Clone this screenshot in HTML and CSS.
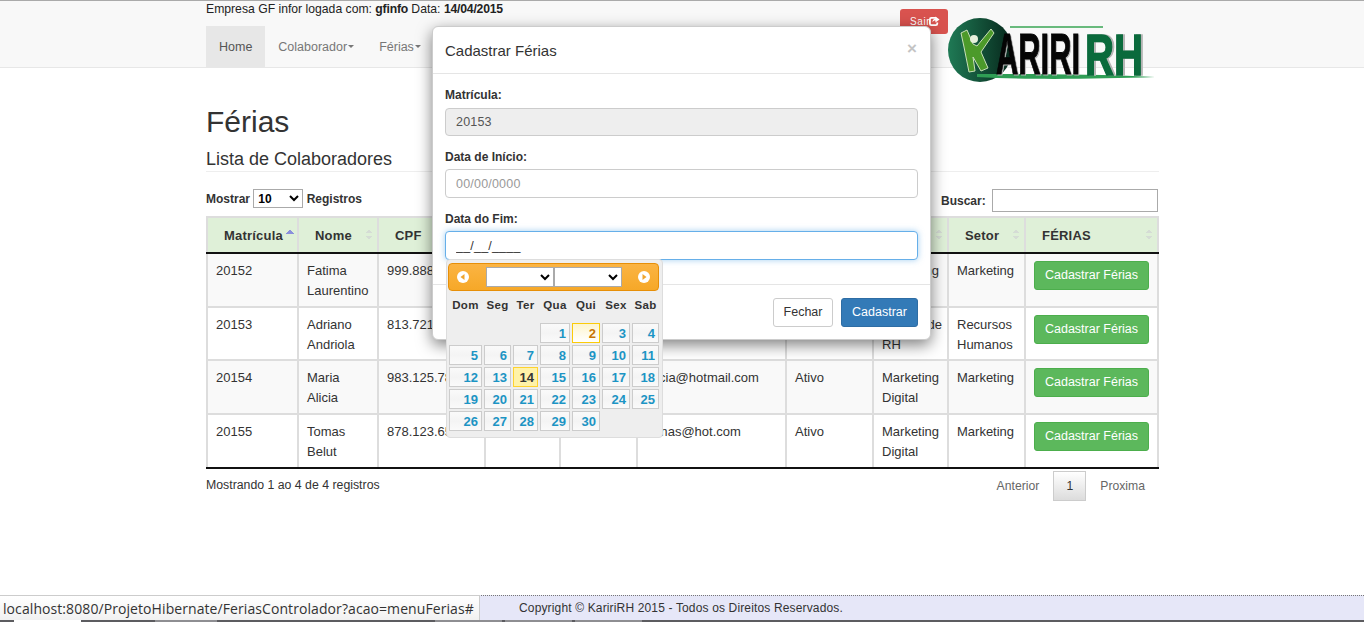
FILE: index.html
```html
<!DOCTYPE html>
<html lang="en">
<head>
    <meta charset="UTF-8">
    <title>KaririRH - Férias</title>
    <link rel="stylesheet" href="styles.css">
</head>
<body>
    <!-- Top bar + menu -->
    <header class="site-header">
        <div class="topbar">
            <p class="session">Empresa GF infor logada com: <b>gfinfo</b> Data: <b>14/04/2015</b></p>
            <a class="btn-sair" href="#">Sair<svg class="sair-icon" viewBox="0 0 12 12" width="11" height="11"><path d="M8 2H2.500A1.500 1.500 0 0 0 1 3.500v5A1.500 1.500 0 0 0 2.500 10h5A1.500 1.500 0 0 0 9 8.500V7" fill="none" stroke="#fff" stroke-width="2"/><path d="M7 0.500l4.500 3.200L7 7V5C5.500 5 4.500 5.500 3.800 7 3.800 4.500 5 3 7 2.800z" fill="#fff"/></svg></a>
        </div>
        <nav class="menu">
            <a class="menu-item active" href="#">Home</a>
            <a class="menu-item" href="#">Colaborador<span class="caret"></span></a>
            <a class="menu-item" href="#">Férias<span class="caret"></span></a>
        </nav>
        <svg class="logo" viewBox="0 0 210 72" width="210" height="72">
            <defs>
                <linearGradient id="ball" x1="0" x2="1" y1="0" y2="0">
                    <stop offset="0" stop-color="#1f7a55"/>
                    <stop offset="1" stop-color="#07281c"/>
                </linearGradient>
            </defs>
            <circle cx="33" cy="33" r="32" fill="url(#ball)"/>
            <path d="M63 10H156" stroke="#3aa655" stroke-width="1.500"/>
            <path d="M30 60C80 63 150 62 208 60C150 57 80 57 30 57z" fill="#2f9e55"/>
            <text class="logo-kariri" x="49" y="57" textLength="84" lengthAdjust="spacingAndGlyphs">ARIRI</text>
            <text class="logo-rh" x="138" y="58" textLength="58" lengthAdjust="spacingAndGlyphs">RH</text>
            <path d="M14 16L20 13L26 27L30 29L44 12L47 16L34 35L41 51L34 54L26 40L28 54L22 55L17 30z" fill="#4c9a2a" stroke="#c9dfb8" stroke-width="1"/>
            <circle cx="27" cy="22" r="4" fill="#e6f0dc"/>
        </svg>
    </header>

    <main class="content">
        <h1 class="page-title">Férias</h1>
        <h3 class="section-title">Lista de Colaboradores</h3>

        <div class="table-tools">
            <label class="tool-label">Mostrar
                <select class="len-select"><option>10</option></select>
                Registros</label>
            <label class="tool-label">Buscar: <input class="search-input" type="text"></label>
        </div>

        <table class="data-table">
            <colgroup>
                <col class="c1"><col class="c2"><col class="c3"><col class="c4"><col class="c5">
                <col class="c6"><col class="c7"><col class="c8"><col class="c9"><col class="c10">
            </colgroup>
            <thead>
                <tr>
                    <th class="sorted">Matrícula</th>
                    <th>Nome</th>
                    <th>CPF</th>
                    <th>RG</th>
                    <th>Fone</th>
                    <th>Email</th>
                    <th>Status</th>
                    <th>Cargo</th>
                    <th>Setor</th>
                    <th>FÉRIAS</th>
                </tr>
            </thead>
            <tbody>
                <tr>
                    <td>20152</td><td>Fatima Laurentino</td><td class="nw">999.888.777-66</td><td class="nw">1234567</td><td class="nw">8899-1234</td>
                    <td>fatima@hotmail.com</td><td>Ativo</td><td>Marketing Digital</td><td>Marketing</td>
                    <td><a class="btn-ferias" href="#">Cadastrar Férias</a></td>
                </tr>
                <tr>
                    <td>20153</td><td>Adriano Andriola</td><td class="nw">813.721.456-10</td><td class="nw">2345678</td><td class="nw">8899-2345</td>
                    <td>adriano@hotmail.com</td><td>Ativo</td><td class="nw">Gestão de<br>RH</td><td>Recursos Humanos</td>
                    <td><a class="btn-ferias" href="#">Cadastrar Férias</a></td>
                </tr>
                <tr>
                    <td>20154</td><td>Maria Alicia</td><td class="nw">983.125.789-20</td><td class="nw">3456789</td><td class="nw">8899-3456</td>
                    <td>alicia@hotmail.com</td><td>Ativo</td><td>Marketing Digital</td><td>Marketing</td>
                    <td><a class="btn-ferias" href="#">Cadastrar Férias</a></td>
                </tr>
                <tr>
                    <td>20155</td><td>Tomas Belut</td><td class="nw">878.123.654-30</td><td class="nw">4567890</td><td class="nw">8899-4567</td>
                    <td>tomas@hot.com</td><td>Ativo</td><td>Marketing Digital</td><td>Marketing</td>
                    <td><a class="btn-ferias" href="#">Cadastrar Férias</a></td>
                </tr>
            </tbody>
        </table>

        <div class="table-foot">
            <span>Mostrando 1 ao 4 de 4 registros</span>
            <div class="pager">
                <a class="page-link" href="#">Anterior</a>
                <a class="page-current" href="#">1</a>
                <a class="page-link" href="#">Proxima</a>
            </div>
        </div>
    </main>

    <footer class="site-footer">Copyright © KaririRH 2015 - Todos os Direitos Reservados.</footer>
    <div class="taskbar">
        <span class="task task-on"></span>
        <span class="task task-wide-gap"></span>
        <span class="task"></span>
        <span class="task"></span>
        <span class="task"></span>
    </div>

    <!-- browser link preview -->
    <div class="link-status">localhost:8080/ProjetoHibernate/FeriasControlador?acao=menuFerias#</div>

    <!-- Modal -->
    <div class="modal">
        <div class="modal-header">
            <h4>Cadastrar Férias</h4>
            <span class="modal-close">×</span>
        </div>
        <div class="modal-body">
            <label class="field-label">Matrícula:</label>
            <input class="field field-off" type="text" value="20153" disabled>
            <label class="field-label">Data de Início:</label>
            <input class="field" type="text" placeholder="00/00/0000">
            <label class="field-label">Data do Fim:</label>
            <input class="field field-focus" type="text" value="__/__/____">
        </div>
        <div class="modal-footer">
            <a class="btn-close" href="#">Fechar</a>
            <a class="btn-save" href="#">Cadastrar</a>
        </div>
    </div>

    <!-- Datepicker -->
    <div class="datepicker">
        <div class="dp-head">
            <svg class="dp-arrow" viewBox="0 0 12 12" width="12" height="12"><circle cx="6" cy="6" r="6" fill="#fff"/><path d="M7.500 3v6L3.500 6z" fill="#f0a52e"/></svg>
            <div class="dp-selects">
                <select class="dp-select"></select>
                <select class="dp-select"></select>
            </div>
            <svg class="dp-arrow" viewBox="0 0 12 12" width="12" height="12"><circle cx="6" cy="6" r="6" fill="#fff"/><path d="M4.500 3v6L8.500 6z" fill="#f0a52e"/></svg>
        </div>
        <div class="dp-grid">
            <span class="dp-dow">Dom</span><span class="dp-dow">Seg</span><span class="dp-dow">Ter</span><span class="dp-dow">Qua</span><span class="dp-dow">Qui</span><span class="dp-dow">Sex</span><span class="dp-dow">Sab</span>
            <span></span><span></span><span></span>
            <a class="dp-day">1</a><a class="dp-day dp-hover">2</a><a class="dp-day">3</a><a class="dp-day">4</a>
            <a class="dp-day">5</a><a class="dp-day">6</a><a class="dp-day">7</a><a class="dp-day">8</a><a class="dp-day">9</a><a class="dp-day">10</a><a class="dp-day">11</a>
            <a class="dp-day">12</a><a class="dp-day">13</a><a class="dp-day dp-today">14</a><a class="dp-day">15</a><a class="dp-day">16</a><a class="dp-day">17</a><a class="dp-day">18</a>
            <a class="dp-day">19</a><a class="dp-day">20</a><a class="dp-day">21</a><a class="dp-day">22</a><a class="dp-day">23</a><a class="dp-day">24</a><a class="dp-day">25</a>
            <a class="dp-day">26</a><a class="dp-day">27</a><a class="dp-day">28</a><a class="dp-day">29</a><a class="dp-day">30</a>
        </div>
    </div>
</body>
</html>
```

FILE: styles.css
```css
* {
    margin: 0;
    padding: 0;
    box-sizing: border-box;
}

body {
    position: relative;
    height: 622px;
    overflow: hidden;
    display: flex;
    flex-direction: column;
    background: #fff;
    color: #333;
    font-family: "Liberation Sans", Arial, sans-serif;
    font-size: 12.5px;
}

a {
    text-decoration: none;
    color: inherit;
}

/* header */
.site-header {
    position: relative;
    height: 68px;
    padding-left: 206px;
    background: #f8f8f8;
    border-top: 1px solid #aaa;
    border-bottom: 1px solid #e7e7e7;
}

.topbar {
    display: flex;
    height: 25px;
}

.session {
    padding-top: 1px;
    font-size: 12.2px;
    color: #222;
}

.session b {
    letter-spacing: -0.2px;
}

.btn-sair {
    display: flex;
    align-items: center;
    height: 25px;
    width: 48px;
    margin: 8px 416px 0 auto;
    padding-left: 10px;
    border-radius: 3px;
    background: #d9534f;
    color: #fff;
    font-size: 10px;
    letter-spacing: 0.6px;
}

.sair-icon {
    margin-left: -1px;
}

.menu {
    display: flex;
    height: 41px;
}

.menu-item {
    display: flex;
    align-items: center;
    padding: 0 12px 0 13px;
    color: #777;
}

.menu-item.active {
    padding-right: 13px;
    background: #e7e7e7;
    color: #555;
}

.caret {
    width: 0;
    height: 0;
    margin-left: 1px;
    border-top: 3px solid #777;
    border-left: 3px solid transparent;
    border-right: 3px solid transparent;
}

.logo {
    position: absolute;
    left: 947px;
    top: 16px;
}

.logo-kariri,
.logo-rh {
    font-family: "Liberation Sans", sans-serif;
    font-weight: 700;
    font-size: 58px;
}

.logo-kariri {
    fill: #050505;
    stroke: #050505;
    stroke-width: 1px;
    filter: drop-shadow(1px 1px 0 #bbb);
}

.logo-rh {
    fill: #0a6a3c;
    stroke: #0a6a3c;
    stroke-width: 1.500px;
    filter: drop-shadow(2px 0 0 #b5b5b5);
}

/* main */
.content {
    flex: 1;
    width: 953px;
    margin-left: 206px;
}

.page-title {
    margin-top: 37px;
    font-size: 30px;
    font-weight: 500;
    line-height: 33px;
}

.section-title {
    margin-top: 11px;
    padding-bottom: 2px;
    font-size: 18px;
    font-weight: 500;
    line-height: 20px;
    border-bottom: 1px solid #eee;
}

.table-tools {
    display: flex;
    justify-content: space-between;
    align-items: flex-start;
    height: 22px;
    margin-top: 17px;
    margin-bottom: 5px;
}

.tool-label {
    font-size: 12px;
    font-weight: 700;
}

.len-select {
    width: 50px;
    height: 19px;
    font-family: "Liberation Sans", sans-serif;
    font-size: 12px;
    font-weight: 700;
    border: 1px solid #aaa;
    background: #fff;
}

.search-input {
    width: 166px;
    height: 23px;
    margin-left: 3px;
    margin-right: 1px;
    border: 1px solid #aaa;
}

/* table */
.data-table {
    width: 951px;
    table-layout: fixed;
    border-collapse: collapse;
}

.c1 { width: 91px; }
.c2 { width: 80px; }
.c3 { width: 107px; }
.c4 { width: 75px; }
.c5 { width: 77px; }
.c6 { width: 149px; }
.c7 { width: 87px; }
.c8 { width: 75px; }
.c9 { width: 77px; }
.c10 { width: 133px; }

.data-table th {
    position: relative;
    height: 36px;
    padding: 0 16px;
    text-align: left;
    font-size: 13px;
    letter-spacing: 0.2px;
    background: #dff0d8;
    border: 2px solid #ddd;
    border-bottom: 2px solid #111;
}

.data-table th::after {
    content: "";
    position: absolute;
    right: 5px;
    top: 11px;
    width: 6px;
    height: 11px;
    background:
        linear-gradient(135deg, transparent 50%, #d5dcd5 50%) left top / 3px 4px no-repeat,
        linear-gradient(225deg, transparent 50%, #d5dcd5 50%) right top / 3px 4px no-repeat,
        linear-gradient(45deg, transparent 50%, #d5dcd5 50%) left bottom / 3px 4px no-repeat,
        linear-gradient(315deg, transparent 50%, #d5dcd5 50%) right bottom / 3px 4px no-repeat;
}

.data-table th.sorted::after {
    right: 3px;
    top: 11px;
    width: 8px;
    height: 5px;
    background: linear-gradient(135deg, transparent 50%, #8a8fdc 50%) left top / 4px 5px no-repeat,
        linear-gradient(225deg, transparent 50%, #8a8fdc 50%) right top / 4px 5px no-repeat;
}

.data-table td {
    height: 53px;
    padding: 7px 8px 4px;
    vertical-align: top;
    font-size: 13px;
    line-height: 19.5px;
    border: 2px solid #ddd;
}

.data-table td.nw {
    white-space: nowrap;
    overflow: hidden;
}

.data-table tbody tr:nth-child(odd) {
    background: #f9f9f9;
}

.data-table tbody tr:nth-child(odd) td {
    height: 54px;
}

.data-table tbody tr:last-child td {
    height: 54px;
    border-bottom: 2px solid #111;
}

.data-table td .btn-ferias {
    display: block;
    height: 29px;
    line-height: 27px;
    text-align: center;
    border: 1px solid #4cae4c;
    border-radius: 3px;
    background: #5cb85c;
    color: #fff;
    font-size: 12.5px;
    white-space: nowrap;
}

.table-foot {
    display: flex;
    justify-content: space-between;
    align-items: flex-start;
    margin-top: 2px;
}

.table-foot > span {
    margin-top: 7px;
    font-size: 12.3px;
}

.pager {
    display: flex;
    align-items: center;
    font-size: 12.2px;
    color: #666;
}

.page-link {
    padding: 0 14px;
}

.page-current {
    width: 33px;
    height: 30px;
    line-height: 28px;
    text-align: center;
    border: 1px solid #ccc;
    background: linear-gradient(#fff, #dcdcdc);
    color: #333;
}

/* footer */
.site-footer {
    height: 25px;
    padding: 5px 0 0 519px;
    line-height: 15px;
    background: #e6e7f8;
    border-top: 1px dotted #777;
    font-size: 12px;
    letter-spacing: 0.15px;
}

.taskbar {
    display: flex;
    height: 2px;
    padding-left: 14px;
    background: #5c5c60;
}

.task {
    width: 67px;
    margin-right: 3px;
    background: #8e8e92;
}

.task-on {
    margin-right: 74px;
    background: #fff;
}

.task-wide-gap {
    width: 62px;
    margin-right: 218px;
}

.link-status {
    position: absolute;
    left: 0;
    bottom: 2px;
    width: 480px;
    height: 25px;
    padding: 3px 0 0 3px;
    background: linear-gradient(#fff, #f1f1f1);
    border-top: 1px solid #ccc;
    border-right: 1px solid #ccc;
    font-family: "Open Sans", sans-serif;
    font-size: 14px;
    letter-spacing: 0.08px;
    white-space: nowrap;
    color: #333;
}

/* modal */
.modal {
    position: absolute;
    left: 432px;
    top: 26px;
    width: 499px;
    height: 314px;
    background: #fff;
    border-radius: 6px;
    border: 1px solid #ccc;
    box-shadow: 0 5px 15px rgba(0, 0, 0, 0.5);
}

.modal-header {
    display: flex;
    justify-content: space-between;
    align-items: center;
    height: 47px;
    padding: 0 13px 0 12px;
    border-bottom: 1px solid #e5e5e5;
}

.modal-header h4 {
    font-size: 15px;
    font-weight: 500;
}

.modal-close {
    font-size: 17px;
    font-weight: 700;
    color: #c4c4c4;
    margin-top: -3px;
}

.modal-body {
    height: 211px;
    padding: 13px 12px 0;
    border-bottom: 1px solid #e5e5e5;
}

.field-label {
    display: block;
    height: 20px;
    font-size: 12px;
    font-weight: 700;
    line-height: 16px;
}

.field {
    display: block;
    width: 473px;
    height: 29px;
    margin-bottom: 13px;
    padding: 0 10px;
    border: 1px solid #ccc;
    border-radius: 4px;
    font-family: "Liberation Sans", sans-serif;
    font-size: 12.5px;
    letter-spacing: 0.2px;
    color: #555;
}

.field::placeholder {
    color: #999;
}

.field-off {
    height: 28px;
    margin-top: 1px;
    background: #eee;
}

.field-focus {
    border-color: #66afe9;
    box-shadow: 0 0 6px rgba(102, 175, 233, 0.6);
    color: #333;
}

.modal-footer {
    display: flex;
    justify-content: flex-end;
    gap: 8px;
    padding: 13px 12px 0;
}

.btn-close,
.btn-save {
    height: 29px;
    line-height: 27px;
    text-align: center;
    border-radius: 3px;
}

.btn-close {
    width: 60px;
    border: 1px solid #ccc;
}

.btn-save {
    width: 77px;
    border: 1px solid #2e6da4;
    background: #337ab7;
    color: #fff;
}

/* datepicker */
.datepicker {
    position: absolute;
    left: 446px;
    top: 259px;
    width: 217px;
    height: 179px;
    padding: 3px 3px 3px 1px;
    background: #eee;
    border: 1px solid #ddd;
    border-radius: 4px;
}

.dp-head {
    display: flex;
    justify-content: space-between;
    align-items: center;
    height: 28px;
    padding: 0 8px;
    background: linear-gradient(#fbb443, #f6a828);
    border: 1px solid #e78f08;
    border-radius: 4px;
}

.dp-selects {
    display: flex;
}

.dp-select {
    width: 68px;
    height: 20px;
    background: #fff;
    border: 1px solid #aaa;
}

.dp-grid {
    display: grid;
    grid-template-columns: 33px 27px 25px 30px 28px 28px 27px;
    grid-template-rows: 30px;
    grid-auto-rows: 20px;
    gap: 2px;
    padding-left: 1px;
}

.dp-dow {
    padding-top: 8px;
    text-align: center;
    font-weight: 700;
    font-size: 11.5px;
    letter-spacing: 0.3px;
    white-space: nowrap;
}

.dp-day {
    padding-right: 3px;
    text-align: right;
    font-weight: 700;
    font-size: 13px;
    line-height: 19px;
    color: #1c94c4;
    background: linear-gradient(#fafafa, #f4f4f4 50%, #fafafa);
    border: 1px solid #ccc;
}

.dp-hover {
    color: #c77405;
    background: linear-gradient(#fdf5ce, #fff);
    border-color: #fbcb09;
}

.dp-today {
    color: #363636;
    background: #fff2a8;
    border-color: #fed22f;
}
```
